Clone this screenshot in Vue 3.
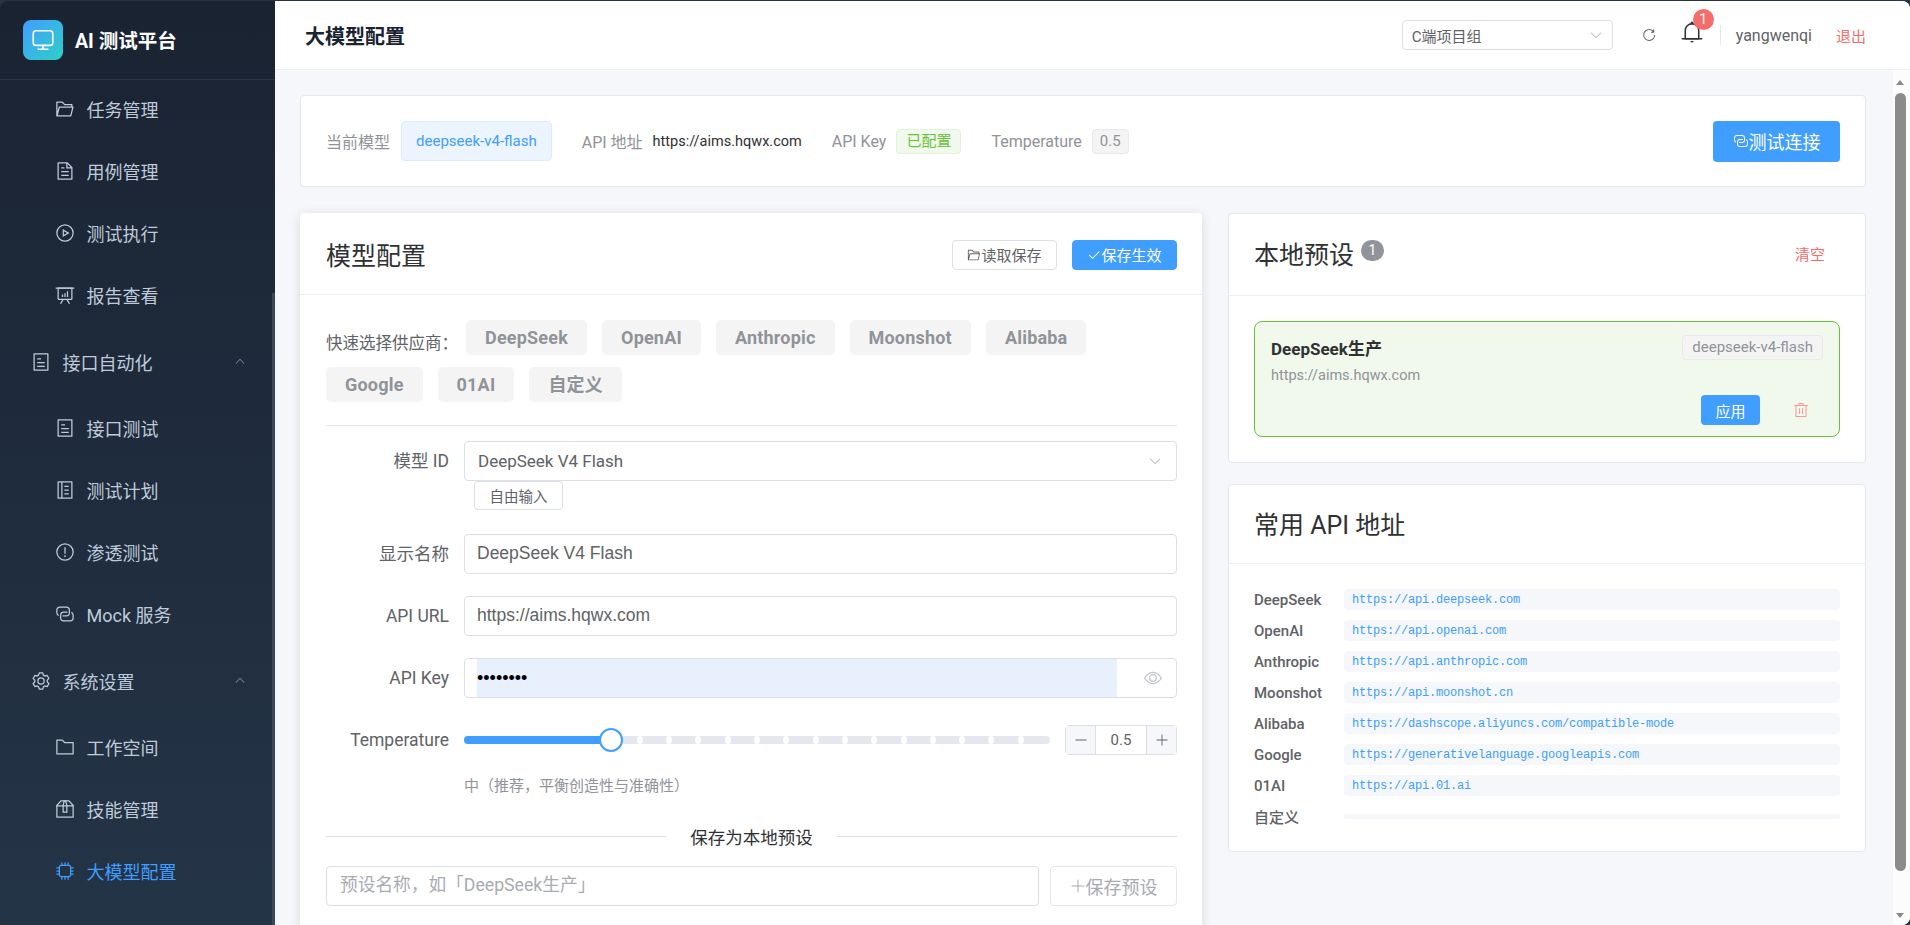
<script setup>
import { h } from 'vue'

const ICONS = {
  folderOpen: ['M878.08 448H241.92l-96 384h636.16l96-384zM832 384v-64H485.76L357.504 192H128v448l57.92-231.744A32 32 0 0 1 216.96 384H832zm-24.96 512H96a32 32 0 0 1-32-32V160a32 32 0 0 1 32-32h287.872l128.384 128H864a32 32 0 0 1 32 32v96h23.04a32 32 0 0 1 31.04 39.744l-112 448A32 32 0 0 1 807.04 896z'],
  document: ['M832 384H576V128H192v768h640V384zm-26.496-64L640 154.496V320h165.504zM160 64h480l256 256v608a32 32 0 0 1-32 32H160a32 32 0 0 1-32-32V96a32 32 0 0 1 32-32zm160 448h384v64H320v-64zm0-192h160v64H320v-64zm0 384h384v64H320v-64z'],
  play: ['M512 896a384 384 0 1 0 0-768 384 384 0 0 0 0 768zm0 64a448 448 0 1 1 0-896 448 448 0 0 1 0 896z', 'M392 312 L744 512 392 712z M456 424 L456 600 L612 512z'],
  board: ['M32 128h960v64H32z', 'M192 192v512h640V192H192zm-64-64h768v576a64 64 0 0 1-64 64H192a64 64 0 0 1-64-64V128z', 'M322.176 960H248.32l144.64-250.56 55.424 32L322.176 960zm453.888 0h-73.856L576 741.44l55.424-32L776.064 960z', 'M352 480h64v128h-64zM480 416h64v192h-64zM608 320h64v288h-64z'],
  tickets: ['M192 128v768h640V128H192zm-32-64h704a32 32 0 0 1 32 32v832a32 32 0 0 1-32 32H160a32 32 0 0 1-32-32V96a32 32 0 0 1 32-32zm160 448h384v64H320v-64zm0-192h192v64H320v-64zm0 384h384v64H320v-64z'],
  memo: ['M192 128v768h640V128H192zm-32-64h704a32 32 0 0 1 32 32v832a32 32 0 0 1-32 32H160a32 32 0 0 1-32-32V96a32 32 0 0 1 32-32z', 'M320 96h64v832h-64zM480 288h224v64H480zM480 480h224v64H480zM480 672h224v64H480z'],
  warning: ['M512 64a448 448 0 1 1 0 896 448 448 0 0 1 0-896zm0 832a384 384 0 0 0 0-768 384 384 0 0 0 0 768zm48-176a48 48 0 1 1-96 0 48 48 0 0 1 96 0zm-48-464a32 32 0 0 1 32 32v288a32 32 0 0 1-64 0V288a32 32 0 0 1 32-32z'],
  connection: ['M640 384v64H448a128 128 0 0 0-128 128v128a128 128 0 0 0 128 128h320a128 128 0 0 0 128-128V576a128 128 0 0 0-64-110.848V394.88c74.56 26.368 128 97.472 128 181.056V704a192 192 0 0 1-192 192H448a192 192 0 0 1-192-192V576a192 192 0 0 1 192-192h192z', 'M384 640v-64h192a128 128 0 0 0 128-128V320a128 128 0 0 0-128-128H256a128 128 0 0 0-128 128v128a128 128 0 0 0 64 110.848v70.272A192.064 192.064 0 0 1 64 448V320a192 192 0 0 1 192-192h320a192 192 0 0 1 192 192v128a192 192 0 0 1-192 192H384z'],
  setting: ['M600.704 64a32 32 0 0 1 30.464 22.208l35.2 109.376c14.784 7.232 28.928 15.36 42.432 24.512l112.384-24.192a32 32 0 0 1 34.432 15.36L944.32 364.8a32 32 0 0 1-4.032 37.504l-77.12 85.12a357.12 357.12 0 0 1 0 49.024l77.12 85.248a32 32 0 0 1 4.032 37.504l-88.704 153.6a32 32 0 0 1-34.432 15.296L708.8 803.904c-13.44 9.088-27.648 17.28-42.368 24.512l-35.264 109.376A32 32 0 0 1 600.704 960H423.296a32 32 0 0 1-30.464-22.208L357.696 828.48a351.616 351.616 0 0 1-42.56-24.64l-112.32 24.256a32 32 0 0 1-34.432-15.36L79.68 659.2a32 32 0 0 1 4.032-37.504l77.12-85.248a357.12 357.12 0 0 1 0-48.896l-77.12-85.248A32 32 0 0 1 79.68 364.8l88.704-153.6a32 32 0 0 1 34.432-15.296l112.32 24.256c13.568-9.152 27.776-17.408 42.56-24.64l35.2-109.312A32 32 0 0 1 423.232 64H600.64zm-23.424 64H446.72l-36.352 113.088-24.512 11.968a294.113 294.113 0 0 0-34.816 20.096l-22.656 15.36-116.224-25.088-65.28 113.152 79.68 88.192-1.92 27.136a293.12 293.12 0 0 0 0 40.192l1.92 27.136-79.808 88.192 65.344 113.152 116.224-25.024 22.656 15.296a294.113 294.113 0 0 0 34.816 20.096l24.512 11.968L446.72 896h130.688l36.48-113.152 24.448-11.904a288.282 288.282 0 0 0 34.752-20.096l22.592-15.296 116.288 25.024 65.28-113.152-79.744-88.192 1.92-27.136a293.12 293.12 0 0 0 0-40.256l-1.92-27.136 79.808-88.128-65.344-113.152-116.288 24.96-22.592-15.232a287.616 287.616 0 0 0-34.752-20.096l-24.448-11.904L577.344 128zM512 320a192 192 0 1 1 0 384 192 192 0 0 1 0-384zm0 64a128 128 0 1 0 0 256 128 128 0 0 0 0-256z'],
  folder: ['M128 192v640h768V320H485.76L357.504 192H128zm-32-64h287.872l128.384 128H928a32 32 0 0 1 32 32v576a32 32 0 0 1-32 32H96a32 32 0 0 1-32-32V160a32 32 0 0 1 32-32z'],
  box: ['M317.056 128 128 344.064V896h768V344.064L706.944 128H317.056zm-14.528-64h418.944a32 32 0 0 1 24.064 10.88l206.528 236.096A32 32 0 0 1 960 332.032V928a32 32 0 0 1-32 32H96a32 32 0 0 1-32-32V332.032a32 32 0 0 1 7.936-21.12L278.4 75.008A32 32 0 0 1 302.528 64z', 'M64 320h896v64H64z', 'M448 327.872V640h128V327.872L526.08 128h-28.16L448 327.872zM448 64h128l64 256v352a32 32 0 0 1-32 32H416a32 32 0 0 1-32-32V320l64-256z'],
  cpu: ['M320 256a64 64 0 0 0-64 64v384a64 64 0 0 0 64 64h384a64 64 0 0 0 64-64V320a64 64 0 0 0-64-64H320zm0-64h384a128 128 0 0 1 128 128v384a128 128 0 0 1-128 128H320a128 128 0 0 1-128-128V320a128 128 0 0 1 128-128z', 'M512 64a32 32 0 0 1 32 32v128h-64V96a32 32 0 0 1 32-32zm160 0a32 32 0 0 1 32 32v128h-64V96a32 32 0 0 1 32-32zm-320 0a32 32 0 0 1 32 32v128h-64V96a32 32 0 0 1 32-32zm160 896a32 32 0 0 1-32-32V800h64v128a32 32 0 0 1-32 32zm160 0a32 32 0 0 1-32-32V800h64v128a32 32 0 0 1-32 32zm-320 0a32 32 0 0 1-32-32V800h64v128a32 32 0 0 1-32 32zM64 512a32 32 0 0 1 32-32h128v64H96a32 32 0 0 1-32-32zm0-160a32 32 0 0 1 32-32h128v64H96a32 32 0 0 1-32-32zm0 320a32 32 0 0 1 32-32h128v64H96a32 32 0 0 1-32-32zm896-160a32 32 0 0 1-32 32H800v-64h128a32 32 0 0 1 32 32zm0-160a32 32 0 0 1-32 32H800v-64h128a32 32 0 0 1 32 32zm0 320a32 32 0 0 1-32 32H800v-64h128a32 32 0 0 1 32 32z'],
  refresh: ['M784.512 230.272v-50.56a32 32 0 1 1 64 0v149.056a32 32 0 0 1-32 32H667.52a32 32 0 1 1 0-64h92.992A320 320 0 1 0 524.8 833.152a320 320 0 0 0 320-320h64a384 384 0 0 1-384 384 384 384 0 0 1-384-384 384 384 0 0 1 643.712-282.88z'],
  bell: ['M512 64a64 64 0 0 1 64 64v64H448v-64a64 64 0 0 1 64-64z', 'M256 768h512V448a256 256 0 1 0-512 0v320zm256-640a320 320 0 0 1 320 320v384H192V448a320 320 0 0 1 320-320z', 'M96 768h832q32 0 32 32t-32 32H96q-32 0-32-32t32-32zm352 128h128a64 64 0 0 1-128 0z'],
  check: ['M406.656 706.944 195.84 496.256a32 32 0 1 0-45.248 45.248l256 256 512-512a32 32 0 0 0-45.248-45.248L406.592 706.944z'],
  plus: ['M480 480V128a32 32 0 0 1 64 0v352h352a32 32 0 1 1 0 64H544v352a32 32 0 1 1-64 0V544H128a32 32 0 0 1 0-64h352z'],
  minus: ['M128 544h768a32 32 0 1 0 0-64H128a32 32 0 0 0 0 64z'],
  del: ['M160 256H96a32 32 0 0 1 0-64h256V95.936a32 32 0 0 1 32-32h256a32 32 0 0 1 32 32V192h256a32 32 0 1 1 0 64h-64v672a32 32 0 0 1-32 32H192a32 32 0 0 1-32-32V256zm448-64v-64H416v64h192zM224 896h576V256H224v640zm192-128a32 32 0 0 1-32-32V416a32 32 0 0 1 64 0v320a32 32 0 0 1-32 32zm192 0a32 32 0 0 1-32-32V416a32 32 0 0 1 64 0v320a32 32 0 0 1-32 32z'],
  view: ['M512 160c320 0 512 352 512 352S832 864 512 864 0 512 0 512s192-352 512-352zm0 64c-225.28 0-384.128 208.064-436.8 288 52.608 79.872 211.456 288 436.8 288 225.28 0 384.128-208.064 436.8-288-52.608-79.872-211.456-288-436.8-288zm0 64a224 224 0 1 1 0 448 224 224 0 0 1 0-448zm0 64a160.192 160.192 0 0 0-160 160c0 88.192 71.744 160 160 160s160-71.808 160-160-71.744-160-160-160z'],
  down: ['M831.872 340.864 512 652.672 192.128 340.864a30.592 30.592 0 0 0-42.752 0 29.12 29.12 0 0 0 0 41.6L489.664 714.24a32 32 0 0 0 44.672 0l340.288-331.712a29.12 29.12 0 0 0 0-41.728 30.592 30.592 0 0 0-42.752 0z'],
  up: ['M488.832 344.32l-339.84 356.672a32 32 0 0 0 0 44.16l.384.384a29.44 29.44 0 0 0 42.688 0l320-335.872 319.872 335.872a29.44 29.44 0 0 0 42.688 0l.384-.384a32 32 0 0 0 0-44.16L535.168 344.32a32 32 0 0 0-46.336 0z']
}

const Ico = (props) =>
  h('svg', { viewBox: '0 0 1024 1024', fill: 'currentColor', 'aria-hidden': 'true' },
    ICONS[props.n].map((d) => h('path', { d })))
Ico.props = ['n']

const menu = [
  { t: '任务管理', i: 'folderOpen', sub: true },
  { t: '用例管理', i: 'document', sub: true },
  { t: '测试执行', i: 'play', sub: true },
  { t: '报告查看', i: 'board', sub: true },
  { t: '接口自动化', i: 'tickets', group: true },
  { t: '接口测试', i: 'tickets', sub: true },
  { t: '测试计划', i: 'memo', sub: true },
  { t: '渗透测试', i: 'warning', sub: true },
  { t: 'Mock 服务', i: 'connection', sub: true },
  { t: '系统设置', i: 'setting', group: true },
  { t: '工作空间', i: 'folder', sub: true },
  { t: '技能管理', i: 'box', sub: true },
  { t: '大模型配置', i: 'cpu', sub: true, active: true }
]

const providers = ['DeepSeek', 'OpenAI', 'Anthropic', 'Moonshot', 'Alibaba', 'Google', '01AI', '自定义']
const stops = Array.from({ length: 14 }, (_, k) => ((k + 6) * 5))

const apis = [
  ['DeepSeek', 'https://api.deepseek.com'],
  ['OpenAI', 'https://api.openai.com'],
  ['Anthropic', 'https://api.anthropic.com'],
  ['Moonshot', 'https://api.moonshot.cn'],
  ['Alibaba', 'https://dashscope.aliyuncs.com/compatible-mode'],
  ['Google', 'https://generativelanguage.googleapis.com'],
  ['01AI', 'https://api.01.ai'],
  ['自定义', '']
]
</script>

<template>
  <div class="app">
    <aside class="side">
      <div class="brand">
        <div class="logo">
          <svg viewBox="0 0 24 24" fill="none" stroke="#fff" stroke-width="1.5" stroke-linecap="round" stroke-linejoin="round">
            <rect x="3" y="3.5" width="18" height="13.5" rx="2.5" />
            <path d="M12 17v3.5M7.5 20.5h9" />
          </svg>
        </div>
        <span class="brand-name">AI 测试平台</span>
      </div>
      <nav class="nav">
        <template v-for="m in menu" :key="m.t">
          <div v-if="m.group" class="group">
            <Ico class="nav-ico" :n="m.i" />
            <span class="group-text">{{ m.t }}</span>
            <Ico class="chev" n="up" />
          </div>
          <div v-else class="item" :class="{ active: m.active }">
            <Ico class="nav-ico" :n="m.i" />
            <span>{{ m.t }}</span>
          </div>
        </template>
      </nav>
      <div class="side-thumb"></div>
    </aside>

    <div class="right">
      <header class="top">
        <h1 class="page-title">大模型配置</h1>
        <div class="top-tools">
          <div class="team">
            <span>C端项目组</span>
            <Ico class="team-chev" n="down" />
          </div>
          <Ico class="refresh" n="refresh" />
          <div class="bell">
            <Ico class="bell-ico" n="bell" />
            <span class="bell-badge">1</span>
          </div>
          <i class="vline"></i>
          <span class="user">yangwenqi</span>
          <span class="logout">退出</span>
        </div>
      </header>

      <main class="main">
        <section class="summary">
          <span class="s-label s-first">当前模型</span>
          <span class="tag-model">deepseek-v4-flash</span>
          <span class="s-label s-gap">API 地址</span>
          <span class="s-value">https://aims.hqwx.com</span>
          <span class="s-label s-gap">API Key</span>
          <span class="tag-ok">已配置</span>
          <span class="s-label s-gap">Temperature</span>
          <span class="tag-gray">0.5</span>
          <button class="btn-test"><Ico class="btn-ico" n="connection" />测试连接</button>
        </section>

        <div class="cols">
          <section class="card form-card">
            <div class="card-head head-form">
              <h2 class="card-title">模型配置</h2>
              <div class="head-btns">
                <button class="btn-sm"><Ico class="sm-ico" n="folderOpen" />读取保存</button>
                <button class="btn-sm primary"><Ico class="sm-ico" n="check" />保存生效</button>
              </div>
            </div>
            <div class="form-body">
              <div class="quick">
                <span class="quick-label">快速选择供应商：</span>
                <span v-for="p in providers" :key="p" class="prov">{{ p }}</span>
              </div>
              <div class="rule"></div>

              <div class="row row-model">
                <label class="lab">模型 ID</label>
                <div class="ctl">
                  <div class="field select-field">
                    <span>DeepSeek V4 Flash</span>
                    <Ico class="field-chev" n="down" />
                  </div>
                  <button class="btn-free">自由输入</button>
                </div>
              </div>
              <div class="row">
                <label class="lab">显示名称</label>
                <div class="ctl"><input class="inp" value="DeepSeek V4 Flash" readonly /></div>
              </div>
              <div class="row">
                <label class="lab">API URL</label>
                <div class="ctl"><input class="inp" value="https://aims.hqwx.com" readonly /></div>
              </div>
              <div class="row">
                <label class="lab">API Key</label>
                <div class="ctl">
                  <div class="field key-field">
                    <input class="key-inp" type="password" value="abcdefgh" readonly />
                    <Ico class="eye" n="view" />
                  </div>
                </div>
              </div>
              <div class="row row-temp">
                <label class="lab">Temperature</label>
                <div class="ctl temp-ctl">
                  <div class="slider">
                    <div class="slider-fill"></div>
                    <i v-for="s in stops" :key="s" class="stop" :style="{ left: s + '%' }"></i>
                    <div class="thumb"></div>
                  </div>
                  <div class="num">
                    <span class="num-btn"><Ico class="num-ico" n="minus" /></span>
                    <span class="num-val">0.5</span>
                    <span class="num-btn"><Ico class="num-ico" n="plus" /></span>
                  </div>
                </div>
              </div>
              <p class="hint">中（推荐，平衡创造性与准确性）</p>

              <div class="dash"><span>保存为本地预设</span></div>
              <div class="save-row">
                <input class="inp save-inp" placeholder="预设名称，如「DeepSeek生产」" />
                <button class="btn-save"><Ico class="save-ico" n="plus" />保存预设</button>
              </div>
            </div>
          </section>

          <div class="side-col">
            <section class="card">
              <div class="card-head head-right">
                <div class="title-wrap">
                  <h2 class="card-title">本地预设</h2>
                  <span class="count">1</span>
                </div>
                <span class="clear">清空</span>
              </div>
              <div class="preset-body">
                <div class="preset">
                  <div class="preset-top">
                    <strong class="preset-name">DeepSeek生产</strong>
                    <span class="preset-tag">deepseek-v4-flash</span>
                  </div>
                  <div class="preset-url">https://aims.hqwx.com</div>
                  <div class="preset-actions">
                    <button class="btn-apply">应用</button>
                    <Ico class="trash" n="del" />
                  </div>
                </div>
              </div>
            </section>

            <section class="card">
              <div class="card-head head-api">
                <h2 class="card-title">常用 API 地址</h2>
              </div>
              <div class="api-body">
                <div v-for="a in apis" :key="a[0]" class="api-row">
                  <span class="api-name">{{ a[0] }}</span>
                  <code class="api-url">{{ a[1] }}</code>
                </div>
              </div>
            </section>
          </div>
        </div>
      </main>

      <div class="vbar" aria-hidden="true">
        <i class="arrow arrow-up"></i>
        <div class="vthumb"></div>
        <i class="arrow arrow-down"></i>
      </div>
    </div>
  </div>
</template>

<style>
html, body { margin: 0; height: 100%; overflow: hidden; background: #2b3240; }
</style>

<style scoped>
* { box-sizing: border-box; }
.app {
  display: flex;
  height: 924px;
  margin-top: 1px;
  border-radius: 8px;
  overflow: hidden;
  font-family: Roboto, "Noto Sans CJK SC", sans-serif;
  color: #303133;
}
button { font-family: inherit; cursor: pointer; }

.side {
  position: relative;
  width: 275px;
  flex: none;
  overflow: hidden;
  background: linear-gradient(180deg, #1a2332 0%, #243447 100%);
}
.brand {
  display: flex;
  align-items: center;
  gap: 12px;
  height: 79px;
  padding-left: 23px;
  border-bottom: 1px solid #2c3646;
}
.logo {
  width: 40px;
  height: 40px;
  border-radius: 8px;
  background: linear-gradient(135deg, #409eff, #2fcfc8);
  display: flex;
  align-items: center;
  justify-content: center;
}
.logo svg { width: 26px; height: 26px; }
.brand-name { color: #fff; font-size: 19.5px; font-weight: 700; margin-top: -2px; }
.nav { margin-top: -2px; }
.item, .group {
  display: flex;
  align-items: center;
  color: #bfcbd9;
  font-size: 18px;
}
.item { height: 62px; padding-left: 55px; gap: 11.5px; }
.group { height: 71px; padding-left: 31px; gap: 11.5px; position: relative; }
.item.active { color: #409eff; }
.nav-ico { width: 20px; height: 20px; flex: none; }
.group .chev { position: absolute; left: 234px; top: 29px; width: 12px; height: 12px; color: #8a97a8; }
.side-thumb { position: absolute; right: 0; top: 292px; bottom: 0; width: 3px; background: #3a4859; }

.right { position: relative; flex: 1; min-width: 0; display: flex; flex-direction: column; background: #f5f7fa; }
.top {
  height: 69px;
  flex: none;
  background: #fff;
  border-bottom: 1px solid #ebeef5;
  display: flex;
  align-items: center;
  justify-content: space-between;
  padding: 0 44px 0 30px;
}
.page-title { margin: 0; font-size: 20px; font-weight: 700; color: #1a2332; }
.top-tools { display: flex; align-items: center; color: #606266; }
.team {
  width: 211px;
  height: 30px;
  border: 1px solid #dcdfe6;
  border-radius: 4px;
  display: flex;
  align-items: center;
  justify-content: space-between;
  padding: 0 9px;
  font-size: 15px;
}
.team-chev { width: 14px; height: 14px; color: #a8abb2; }
.refresh { width: 16px; height: 16px; margin-left: 28px; color: #606266; }
.bell { position: relative; margin-left: 23px; width: 24px; height: 24px; }
.bell-ico { width: 24px; height: 24px; color: #303133; display: block; margin-top: -3px; }
.bell-badge {
  position: absolute;
  left: 13px;
  top: -14px;
  width: 21px;
  height: 21px;
  border-radius: 11px;
  background: #f56c6c;
  color: #fff;
  font-size: 14px;
  text-align: center;
  line-height: 21px;
}
.vline { width: 1px; height: 20px; background: #e4e7ed; margin-left: 16px; }
.user { margin-left: 15px; font-size: 16px; }
.logout { margin-left: 24px; color: #f56c6c; font-size: 15px; }

.main {
  flex: 1;
  min-height: 0;
  overflow: hidden;
  padding: 25px 44px 25px 25px;
}
.vbar { position: absolute; right: 0; top: 69px; bottom: 0; width: 17px; background: #fcfcfc; }
.vthumb { position: absolute; left: 2px; width: 11px; top: 23px; height: 778px; background: #8b8b8b; border-radius: 6px; }
.arrow { position: absolute; left: 3px; width: 0; height: 0; border-left: 4.5px solid transparent; border-right: 4.5px solid transparent; }
.arrow-up { top: 10px; border-bottom: 5px solid #8b8b8b; }
.arrow-down { bottom: 7px; border-top: 5px solid #8b8b8b; }

.summary {
  height: 92px;
  background: #fff;
  border: 1px solid #e4e7ed;
  border-radius: 4px;
  display: flex;
  align-items: center;
  padding: 0 25px;
  font-size: 15px;
}
.s-label { color: #909399; font-size: 16px; margin-right: 10px; }
.s-first { margin-right: 11px; }
.s-gap { margin-left: 30px; }
.s-value { color: #303133; font-size: 14.5px; }
.tag-model {
  height: 40px;
  line-height: 38px;
  padding: 0 14px;
  background: #ecf5ff;
  border: 1px solid #d9ecff;
  border-radius: 4px;
  color: #409eff;
  font-size: 15px;
}
.tag-ok, .tag-gray {
  height: 25px;
  line-height: 23px;
  padding: 0 9px;
  border-radius: 4px;
  font-size: 15px;
  border: 1px solid;
}
.tag-ok { background: #f0f9eb; border-color: #e1f3d8; color: #67c23a; }
.tag-gray { background: #f4f4f5; border-color: #e9e9eb; color: #909399; padding: 0 7px; }
.btn-test {
  margin-left: auto;
  width: 127px;
  height: 41px;
  background: #409eff;
  border: 0;
  border-radius: 4px;
  color: #fff;
  font-size: 18px;
  display: flex;
  align-items: center;
  justify-content: center;
}
.btn-ico { width: 16px; height: 16px; }

.cols { display: grid; grid-template-columns: 902px 1fr; gap: 26px; margin-top: 26px; align-items: start; }
.side-col { display: flex; flex-direction: column; gap: 21px; }
.card { background: #fff; border: 1px solid #e4e7ed; border-radius: 4px; }
.form-card { border: 0; box-shadow: 0 2px 12px rgba(0, 0, 0, 0.12); }
.card-head { display: flex; align-items: center; justify-content: space-between; border-bottom: 1px solid #ebeef5; }
.head-form { height: 82px; padding: 0 25px 0 26px; }
.head-right { height: 82px; padding: 0 40px 3px 25px; }
.head-api { height: 79px; padding: 0 25px 2px; }
.card-title { margin: 0; font-size: 25px; font-weight: 400; color: #303133; }
.head-btns { display: flex; gap: 15px; margin-top: 2px; }
.btn-sm {
  width: 105px;
  height: 30px;
  background: #fff;
  border: 1px solid #dcdfe6;
  border-radius: 4px;
  color: #606266;
  font-size: 15px;
  display: flex;
  align-items: center;
  justify-content: center;
  padding: 0;
}
.btn-sm.primary { background: #409eff; border-color: #409eff; color: #fff; }
.sm-ico { width: 14px; height: 14px; }

.form-body { padding: 25px 25px 24px 26px; }
.quick { display: flex; flex-wrap: wrap; align-items: center; gap: 12px 15px; }
.quick-label { font-size: 16.5px; color: #606266; margin-right: 5px; padding-top: 8px; width: 120px; white-space: nowrap; }
.prov {
  height: 35px;
  line-height: 35px;
  padding: 0 19px;
  background: #f4f4f5;
  border-radius: 5px;
  font-size: 18px;
  font-weight: 700;
  letter-spacing: 0.2px;
  color: #909399;
}
.rule { height: 1px; background: #e4e7ed; margin: 23px 0 15px; }
.row { display: flex; margin-bottom: 22px; }
.row-model { margin-bottom: 24px; }
.lab { width: 123px; flex: none; text-align: right; font-size: 17.5px; line-height: 40px; color: #606266; }
.ctl { flex: 1; min-width: 0; margin-left: 15px; }
.field, .inp {
  display: flex;
  align-items: center;
  width: 100%;
  height: 40px;
  background: #fff;
  border: 1px solid #dcdfe6;
  border-radius: 4px;
  color: #606266;
  outline: none;
}
.select-field { justify-content: space-between; padding: 0 14px 0 13px; font-size: 17px; }
.field-chev { width: 14px; height: 14px; color: #a8abb2; }
.btn-free {
  display: block;
  width: 89px;
  height: 29px;
  margin-left: 10px;
  background: #fff;
  border: 1px solid #dcdfe6;
  border-radius: 4px;
  color: #606266;
  font-size: 14.5px;
  padding: 0;
}
.inp { padding: 0 13px 2px 12px; font-family: "Liberation Sans", "Noto Sans CJK SC", sans-serif; font-size: 17.5px; }
.key-field { padding: 0 14px 0 12px; gap: 27px; }
.key-inp {
  flex: 1;
  min-width: 0;
  height: 38px;
  border: 0;
  outline: none;
  background: #e8f0fe;
  color: #000;
  padding: 0;
  font-size: 18px;
}
.eye { width: 18px; height: 18px; color: #c0c4cc; flex: none; }
.row-temp { margin-bottom: 0; align-items: center; height: 40px; }
.temp-ctl { display: flex; align-items: center; }
.slider { position: relative; width: 586px; height: 8px; background: #e4e7ed; border-radius: 4px; }
.slider-fill { width: 25%; height: 100%; background: #409eff; border-radius: 4px 0 0 4px; }
.stop { position: absolute; top: 0; width: 6px; height: 8px; margin-left: -3px; border-radius: 50%; background: #fff; }
.thumb { position: absolute; left: 25%; top: 50%; width: 24px; height: 24px; margin: -12px 0 0 -12px; border-radius: 50%; background: #fff; border: 2px solid #409eff; }
.num { margin-left: auto; width: 112px; height: 30px; border: 1px solid #dcdfe6; border-radius: 4px; display: flex; align-items: center; background: #fff; font-size: 15px; color: #606266; }
.num-btn { width: 30px; height: 100%; background: #f5f7fa; display: flex; align-items: center; justify-content: center; }
.num-btn:first-child { border-right: 1px solid #dcdfe6; }
.num-btn:last-child { border-left: 1px solid #dcdfe6; }
.num-val { flex: 1; text-align: center; }
.num-ico { width: 14px; height: 14px; }
.hint { margin: 16px 0 0 138px; font-size: 15px; line-height: 20px; color: #909399; }
.dash { display: flex; align-items: center; gap: 24px; margin-top: 28px; font-size: 17.5px; color: #303133; }
.dash::before, .dash::after { content: ""; height: 1px; background: #dcdfe6; flex: 1; }
.save-row { display: flex; gap: 11px; margin-top: 17px; }
.save-inp { flex: 1; width: auto; font-family: Roboto, "Noto Sans CJK SC", sans-serif; font-size: 17.7px; padding-left: 13px; }
.save-inp::placeholder { color: #a8abb2; }
.btn-save { width: 127px; height: 40px; background: #fff; border: 1px solid #e4e7ed; border-radius: 4px; color: #a8abb2; font-size: 18px; display: flex; align-items: center; justify-content: center; padding: 0; }
.save-ico { width: 16px; height: 16px; }

.title-wrap { display: flex; align-items: center; gap: 7px; }
.count { width: 23px; height: 21px; border-radius: 11px; background: #909399; color: #fff; font-size: 14px; line-height: 21px; text-align: center; margin-top: -5px; }
.clear { color: #f56c6c; font-size: 15px; }
.preset-body { padding: 25px; }
.preset { background: #f0f9eb; border: 1px solid #67c23a; border-radius: 8px; height: 116px; padding: 13px 16px 0; }
.preset-top { display: flex; align-items: center; justify-content: space-between; height: 25px; }
.preset-name { font-size: 17px; font-weight: 700; color: #303133; }
.preset-tag { height: 25px; line-height: 23px; padding: 0 9px; border: 1px solid #e9e9eb; background: #f4f4f5; border-radius: 4px; font-size: 15px; color: #909399; }
.preset-url { font-size: 14.5px; color: #909399; margin-top: 6px; line-height: 20px; }
.preset-actions { display: flex; align-items: center; justify-content: flex-end; padding-right: 14px; gap: 33px; margin-top: 9px; }
.btn-apply { width: 59px; height: 30px; border: 0; border-radius: 4px; background: #409eff; color: #fff; font-size: 15px; padding: 0; }
.trash { width: 16px; height: 16px; color: #f89898; }
.api-body { padding: 25px 25px 24px; display: flex; flex-direction: column; gap: 10px; }
.api-row { display: flex; align-items: center; min-height: 21px; }
.api-name { width: 90px; flex: none; font-size: 15px; font-weight: 500; color: #606266; }
.api-url {
  flex: 1;
  min-height: 5px;
  background: #f5f7fa;
  border-radius: 4px;
  padding: 2px 8px 0;
  line-height: 19px;
  font-family: "Liberation Mono", monospace;
  font-size: 12px;
  letter-spacing: -0.2px;
  color: #409eff;
}
.api-url:empty { padding: 0; min-height: 5px; }
</style>
